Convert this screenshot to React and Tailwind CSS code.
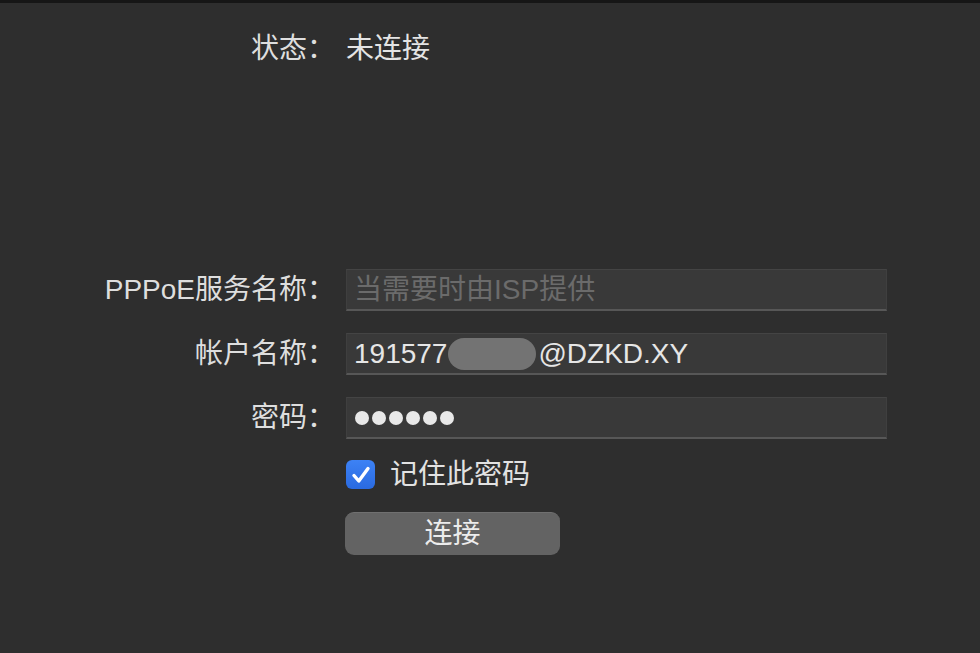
const font = { fontFamily: '"Liberation Sans", "Noto Sans CJK SC", sans-serif' }

function Field({ children }) {
  return (
    <div className="h-[42px] w-[541px] flex items-center px-[7px] bg-[#393939] border-t border-[#444444] border-b-2 border-b-[#575757] border-x border-x-[#3f3f3f]">
      {children}
    </div>
  )
}

function Row({ label, children }) {
  return (
    <div className="flex items-center">
      <div className="w-[346px] pr-[11px] text-right text-[#dedede]">{label}</div>
      {children}
    </div>
  )
}

export default function App() {
  return (
    <div className="w-[980px] h-[653px] bg-[#2e2e2e] text-[28px] leading-none overflow-hidden" style={font}>
      <div className="h-[3px] bg-[#161616]" />

      <div className="pt-[32px]">
        <Row label="状态：">
          <span className="text-[#e4e4e4]">未连接</span>
        </Row>
      </div>

      <div className="mt-[206px] flex flex-col gap-[22px]">
        <Row label="PPPoE服务名称：">
          <Field>
            <span className="text-[#6b6b6b]">当需要时由ISP提供</span>
          </Field>
        </Row>
        <Row label="帐户名称：">
          <Field>
            <span className="text-[#e6e6e6]">191577</span>
            <span className="inline-block w-[88px] h-[32px] rounded-full bg-[#737373] ml-[1px] mr-[2px]" />
            <span className="text-[#e6e6e6]">@DZKD.XY</span>
          </Field>
        </Row>
        <Row label="密码：">
          <Field>
            <div className="flex gap-[3px] pl-[1px]">
              {[0, 1, 2, 3, 4, 5].map(i => (
                <span key={i} className="w-[14px] h-[14px] rounded-full bg-[#e8e8e8]" />
              ))}
            </div>
          </Field>
        </Row>
      </div>

      <div className="ml-[346px] mt-[21px] flex items-center gap-[15px]">
        <div className="w-[29px] h-[29px] rounded-[6px] bg-gradient-to-b from-[#3d82f5] to-[#2a6ae0] flex items-center justify-center">
          <svg width="24" height="24" viewBox="0 0 24 24" fill="none">
            <path d="M5 12.5 L9.8 18 L19 5.5" stroke="white" strokeWidth="3.4" strokeLinecap="round" strokeLinejoin="round" />
          </svg>
        </div>
        <span className="text-[#e2e2e2]">记住此密码</span>
      </div>

      <button className="ml-[345px] mt-[23px] w-[215px] h-[43px] rounded-[9px] bg-[#636363] border-t border-[#707070] text-[#ececec] text-[28px] flex items-center justify-center">
        连接
      </button>
    </div>
  )
}
